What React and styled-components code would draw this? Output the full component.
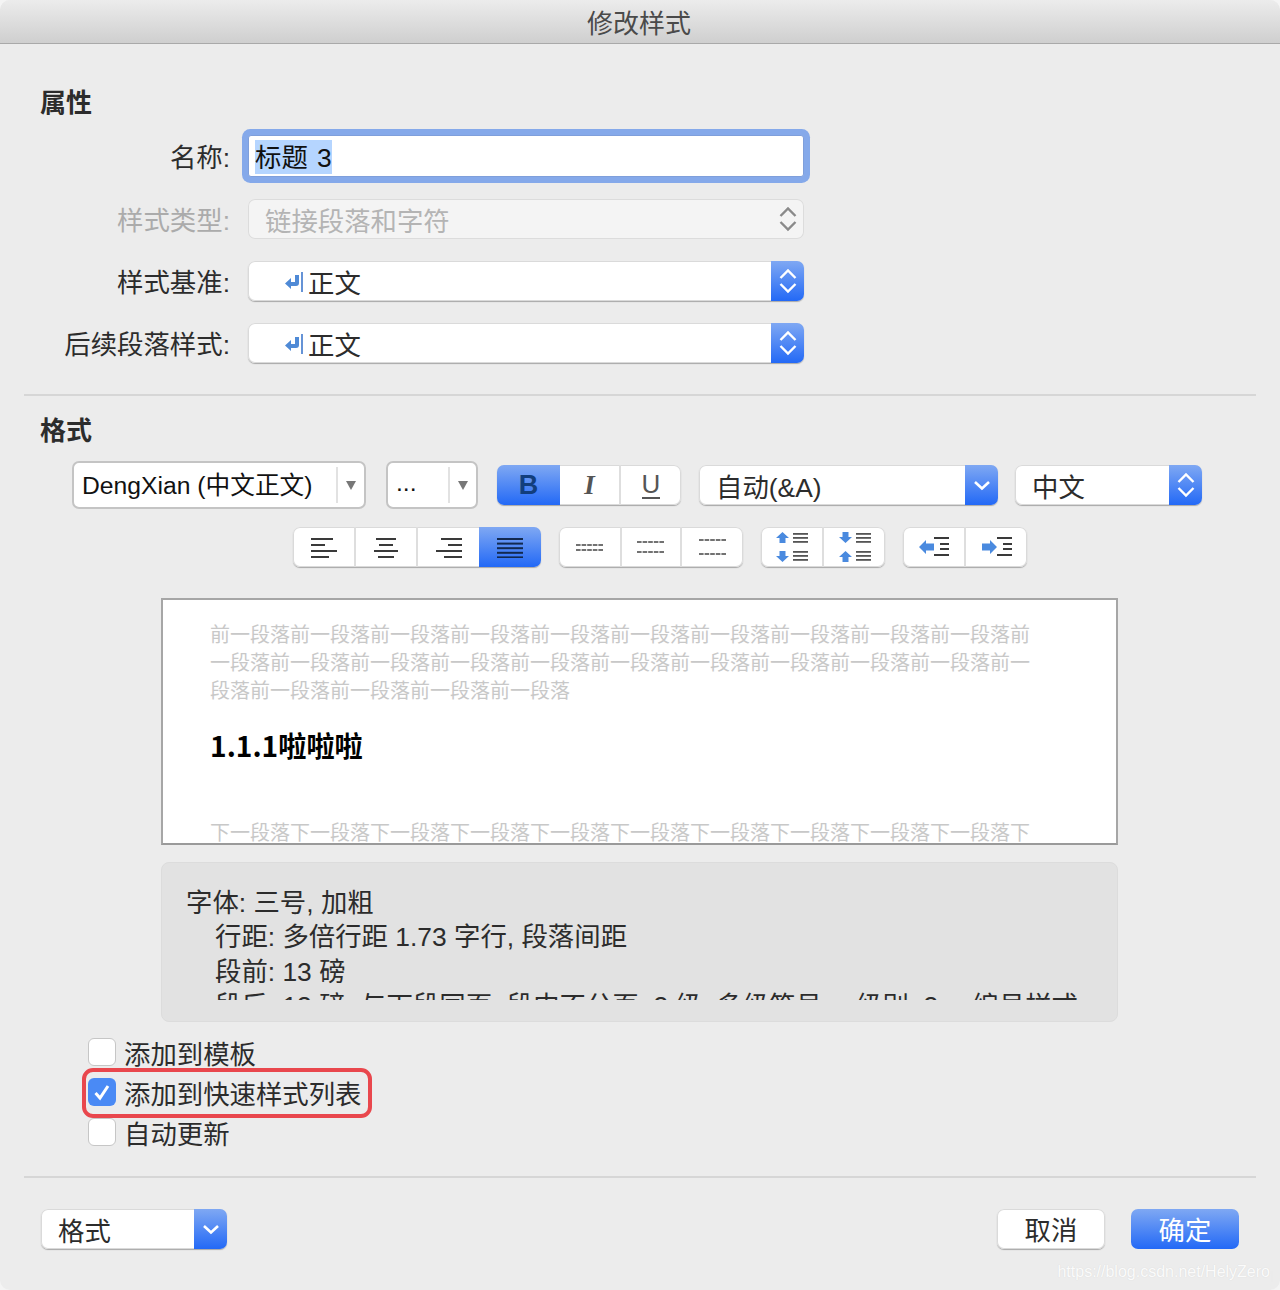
import styled, { createGlobalStyle } from "styled-components";

const GlobalStyle = createGlobalStyle`
  html, body {
    margin: 0;
    padding: 0;
    background: #f4f4f4;
  }
  * {
    box-sizing: border-box;
  }
`;

const BLUE = "linear-gradient(180deg, #7fa8f3 0%, #2369f6 100%)";
const RAISED = "0 1px 1px #a8a8a8, inset 0 0 0 1px #dadada";

const Dialog = styled.div`
  width: 1280px;
  height: 1290px;
  position: relative;
  overflow: hidden;
  background: #ececec;
  border-radius: 10px;
  color: #2c2c2c;
  font-family: "Liberation Sans", "Noto Sans CJK SC", sans-serif;
  font-size: 26.4px;
`;

const TitleBar = styled.div`
  height: 44px;
  display: flex;
  align-items: center;
  justify-content: center;
  padding-right: 2px;
  background: linear-gradient(180deg, #ececec 0%, #cfcfcf 100%);
  border-bottom: 1px solid #a9a9a9;
  color: #4a4a4a;
  font-size: 26px;
`;

const Heading = styled.div`
  height: 30px;
  line-height: 30px;
  margin-left: 40px;
  font-weight: 700;
  font-size: 26px;
`;

const Form = styled.div`
  padding-top: 44px;
`;

const Row = styled.div`
  display: flex;
  align-items: center;
  height: 40px;
  margin-top: ${(p) => p.$top}px;
`;

const Label = styled.div`
  width: 230px;
  margin: -2px 18px 0 0;
  text-align: right;
  color: ${(p) => (p.$disabled ? "#ababab" : "#2c2c2c")};
  white-space: nowrap;
`;

const NameField = styled.div`
  width: 556px;
  height: 42px;
  margin: -1px 0;
  background: #fff;
  border: 1px solid #7f9fdb;
  box-shadow: 0 0 0 6px #85a9ea;
  border-radius: 3px;
  padding: 2px 0 0 6px;
  display: flex;
  align-items: center;
  color: #111;
`;

const Selected = styled.span`
  background: #b5d5ff;
  height: 34px;
  line-height: 37px;
  word-spacing: 2px;
  white-space: pre;
`;

const PopUp = styled.div`
  width: ${(p) => p.$w}px;
  height: 40px;
  margin-left: ${(p) => p.$left || 0}px;
  display: flex;
  align-items: stretch;
  flex: none;
  background: ${(p) => (p.$disabled ? "#f4f4f4" : "#fff")};
  border-radius: 7px;
  overflow: hidden;
  box-shadow: ${(p) => (p.$disabled ? "inset 0 0 0 1px #dcdcdc" : RAISED)};
`;

const PopUpText = styled.div`
  flex: 1;
  display: flex;
  align-items: center;
  padding-left: ${(p) => p.$pad}px;
  color: ${(p) => (p.$disabled ? "#b4b4b4" : "#2c2c2c")};
  white-space: nowrap;
`;

const PopUpArrow = styled.div`
  width: 33px;
  flex: none;
  display: flex;
  align-items: center;
  justify-content: center;
  background: ${(p) => (p.$disabled ? "transparent" : BLUE)};
`;

const Divider = styled.div`
  height: 2px;
  margin: ${(p) => p.$top}px 24px 0;
  background: #d6d6d6;
`;

const FormatHeading = styled(Heading)`
  margin-top: 20px;
`;

const Toolbar = styled.div`
  display: flex;
  align-items: center;
  margin-top: ${(p) => p.$top}px;
  padding-left: ${(p) => p.$left}px;
`;

const Combo = styled.div`
  width: ${(p) => p.$w}px;
  height: 48px;
  margin-left: ${(p) => p.$left || 0}px;
  flex: none;
  display: flex;
  align-items: center;
  background: #fff;
  border: 2px solid #c4c4c4;
  border-radius: 7px;
  color: #111;
  font-size: 24.7px;
`;

const ComboText = styled.div`
  flex: 1;
  margin-top: -4px;
  padding-left: 8px;
  white-space: nowrap;
`;

const ComboCaret = styled.div`
  width: 28px;
  height: 36px;
  flex: none;
  display: flex;
  align-items: center;
  justify-content: center;
  border-left: 2px solid #e2e2e2;
  &::after {
    content: "";
    border-left: 5px solid transparent;
    border-right: 5px solid transparent;
    border-top: 9px solid #777;
  }
`;

const Segments = styled.div`
  display: flex;
  height: 40px;
  flex: none;
  margin-left: ${(p) => p.$left || 0}px;
  background: #fff;
  border-radius: 7px;
  overflow: hidden;
  box-shadow: ${RAISED};
`;

const Segment = styled.div`
  width: ${(p) => p.$w}px;
  flex: none;
  display: flex;
  align-items: center;
  justify-content: center;
  background: ${(p) => (p.$on ? BLUE : "transparent")};
  border-left: ${(p) => (p.$first || p.$on ? "none" : "2px solid #dedede")};
`;

const BoldLetter = styled.span`
  font: 700 27px "Liberation Sans", sans-serif;
  color: #123e7c;
`;

const ItalicLetter = styled.span`
  font: italic 700 27px "Liberation Serif", serif;
  color: #555;
`;

const UnderLetter = styled.span`
  font: 400 26px "Liberation Sans", sans-serif;
  color: #555;
  border-bottom: 2px solid #555;
  line-height: 24px;
  height: 27px;
`;

const Preview = styled.div`
  width: 957px;
  height: 247px;
  margin: 31px 0 0 161px;
  background: #fff;
  border: 2px solid #a6a6a6;
  border-bottom-color: #9a9a9a;
  overflow: hidden;
  padding: 20px 0 0 47px;
  font-family: "Noto Sans CJK SC", sans-serif;
`;

const GhostText = styled.div`
  width: 822px;
  font-size: 20px;
  font-weight: 400;
  line-height: 28px;
  color: #c8c8c8;
  height: ${(p) => p.$h}px;
`;

const PreviewTitle = styled.div`
  height: 40px;
  margin: 21px 0 53px;
  line-height: 40px;
  font-size: 28.2px;
  font-weight: 700;
  color: #000;
`;

const Summary = styled.div`
  width: 957px;
  height: 160px;
  margin: 17px 0 0 161px;
  padding: 23px 0 0 24px;
  background: #e2e2e2;
  border: 1px solid #dcdcdc;
  border-radius: 8px;
`;

const SummaryClip = styled.div`
  height: 114px;
  overflow: hidden;
`;

const SummaryLine = styled.div`
  height: 34.3px;
  line-height: 34.3px;
  padding-left: ${(p) => (p.$indent ? 29 : 0)}px;
  white-space: nowrap;
`;

const Plus = styled.span`
  margin: 0 2px;
`;

const Checks = styled.div`
  position: relative;
  margin: 16px 0 0 88px;
  display: flex;
  flex-direction: column;
  gap: 12px;
`;

const CheckRow = styled.div`
  display: flex;
  align-items: center;
  height: 28px;
  gap: 8px;
  white-space: nowrap;
`;

const CheckBox = styled.div`
  width: 28px;
  height: 28px;
  flex: none;
  display: flex;
  align-items: center;
  justify-content: center;
  border-radius: 6px;
  background: ${(p) => (p.$on ? "#4a8af5" : "#fff")};
  border: ${(p) => (p.$on ? "none" : "1px solid #c6c6c6")};
`;

const Highlight = styled.div`
  position: absolute;
  left: -6px;
  top: 30px;
  width: 290px;
  height: 50px;
  border: 4px solid #e9474d;
  border-radius: 11px;
  pointer-events: none;
`;

const Footer = styled.div`
  display: flex;
  align-items: center;
  margin-top: 31px;
  padding: 0 41px;
`;

const Button = styled.div`
  width: 108px;
  height: 40px;
  margin-left: ${(p) => p.$left}px;
  padding-bottom: 2px;
  flex: none;
  display: flex;
  align-items: center;
  justify-content: center;
  border-radius: 7px;
  background: ${(p) => (p.$primary ? BLUE : "#fff")};
  color: ${(p) => (p.$primary ? "#fff" : "#2c2c2c")};
  box-shadow: ${(p) => (p.$primary ? "none" : RAISED)};
`;

const Spacer = styled.div`
  flex: 1;
`;

const Watermark = styled.div`
  position: absolute;
  right: 10px;
  bottom: 9px;
  font-size: 16px;
  color: #fff;
  opacity: 0.8;
  text-shadow: 0 0 1px #cfcfcf;
`;

const ReturnIcon = styled.svg`
  margin: 2px 5px 0 -1px;
`;

const Updown = ({ color = "#fff" }) => (
  <svg width="18" height="28" viewBox="0 0 18 28" fill="none">
    <path d="M1.5 11L9 3.5l7.5 7.5M1.5 17L9 24.5 16.5 17" stroke={color} strokeWidth="2.4" />
  </svg>
);

const Down = () => (
  <svg width="18" height="12" viewBox="0 0 18 12" fill="none">
    <path d="M2 3l7 6.5L16 3" stroke="#fff" strokeWidth="2.6" />
  </svg>
);

const ReturnMark = () => (
  <ReturnIcon width="19" height="22" viewBox="0 0 19 22">
    <path d="M18 1v20" stroke="#3f78cc" strokeWidth="1.6" />
    <path d="M15 4h-4v7H7V7l-6 5.5L7 18v-3h5c2 0 3-1 3-3z" fill="#4f8ad6" />
  </ReturnIcon>
);

const ALIGN_ROWS = {
  left: [[0, 22], [0, 14], [0, 26], [0, 18]],
  center: [[3, 20], [6, 14], [1, 24], [5, 16]],
  right: [[5, 21], [12, 14], [0, 26], [8, 18]],
  justify: [[0, 26], [0, 26], [0, 26], [0, 26], [0, 26]],
};

const Align = ({ kind, color = "#3a3a3a" }) => {
  const step = kind === "justify" ? 4.6 : 6;
  return (
    <svg width="26" height="21" viewBox="0 0 26 21">
      {ALIGN_ROWS[kind].map(([x, w], i) => (
        <rect key={i} x={x} y={i * step + 1} width={w} height="2" fill={color} />
      ))}
    </svg>
  );
};

const Spacing = ({ rows }) => (
  <svg width="28" height="20" viewBox="0 0 28 20">
    {rows.map((y) => (
      <line key={y} x1="0" x2="28" y1={y} y2={y} stroke="#444" strokeWidth="1.5" strokeDasharray="4.6 1" />
    ))}
  </svg>
);

const ParaSpace = ({ flip }) => (
  <svg width="32" height="30" viewBox="0 0 32 30">
    <path
      d={
        flip
          ? "M3.5 0h6v5H13l-6.5 6L0 5h3.5z M6.5 19L13 25H9.5v5h-6v-5H0z"
          : "M6.5 0L13 6H9.5v5h-6V6H0z M3.5 19h6v5H13l-6.5 6L0 24h3.5z"
      }
      fill="#4a8adf"
    />
    {[2, 6, 10, 20, 24, 28].map((y) => (
      <rect key={y} x="17" y={y - 1} width="15" height="1.8" fill="#555" />
    ))}
  </svg>
);

const Indent = ({ right }) => (
  <svg width="30" height="20" viewBox="0 0 30 20">
    <path
      d={right ? "M0 6.5h8V3l7 7-7 7v-3.5H0z" : "M0 10l7-7v3.5h8v7H7V17z"}
      fill="#4a8adf"
    />
    {[
      [15, 1, 15],
      [21, 7, 9],
      [21, 12, 9],
      [15, 18, 15],
    ].map(([x, y, w]) => (
      <rect key={y} x={x} y={y - 1} width={w} height="2" fill="#3a3a3a" />
    ))}
  </svg>
);

const Check = () => (
  <svg width="20" height="20" viewBox="0 0 20 20" fill="none">
    <path d="M3.5 11l4.5 5L16 4" stroke="#fff" strokeWidth="3" />
  </svg>
);

const App = () => (
  <Dialog>
    <GlobalStyle />
    <TitleBar>修改样式</TitleBar>

    <Form>
      <Heading>属性</Heading>
      <Row $top={18}>
        <Label>名称:</Label>
        <NameField>
          <Selected>标题 3</Selected>
        </NameField>
      </Row>
      <Row $top={23}>
        <Label $disabled>样式类型:</Label>
        <PopUp $w={556} $disabled>
          <PopUpText $pad={17} $disabled>链接段落和字符</PopUpText>
          <PopUpArrow $disabled>
            <Updown color="#8a8a8a" />
          </PopUpArrow>
        </PopUp>
      </Row>
      <Row $top={22}>
        <Label>样式基准:</Label>
        <PopUp $w={556}>
          <PopUpText $pad={37}>
            <ReturnMark />
            正文
          </PopUpText>
          <PopUpArrow>
            <Updown />
          </PopUpArrow>
        </PopUp>
      </Row>
      <Row $top={22}>
        <Label>后续段落样式:</Label>
        <PopUp $w={556}>
          <PopUpText $pad={37}>
            <ReturnMark />
            正文
          </PopUpText>
          <PopUpArrow>
            <Updown />
          </PopUpArrow>
        </PopUp>
      </Row>
    </Form>

    <Divider $top={31} />

    <FormatHeading>格式</FormatHeading>

    <Toolbar $top={15} $left={72}>
      <Combo $w={294}>
        <ComboText>DengXian (中文正文)</ComboText>
        <ComboCaret />
      </Combo>
      <Combo $w={92} $left={20}>
        <ComboText>...</ComboText>
        <ComboCaret />
      </Combo>
      <Segments $left={19}>
        <Segment $w={63} $first $on>
          <BoldLetter>B</BoldLetter>
        </Segment>
        <Segment $w={59} $first>
          <ItalicLetter>I</ItalicLetter>
        </Segment>
        <Segment $w={62}>
          <UnderLetter>U</UnderLetter>
        </Segment>
      </Segments>
      <PopUp $w={299} $left={18}>
        <PopUpText $pad={17}>自动(&amp;A)</PopUpText>
        <PopUpArrow>
          <Down />
        </PopUpArrow>
      </PopUp>
      <PopUp $w={187} $left={17}>
        <PopUpText $pad={17}>中文</PopUpText>
        <PopUpArrow>
          <Updown />
        </PopUpArrow>
      </PopUp>
    </Toolbar>

    <Toolbar $top={18} $left={293}>
      <Segments>
        <Segment $w={61} $first><Align kind="left" /></Segment>
        <Segment $w={62}><Align kind="center" /></Segment>
        <Segment $w={63}><Align kind="right" /></Segment>
        <Segment $w={62} $on><Align kind="justify" color="#12294f" /></Segment>
      </Segments>
      <Segments $left={18}>
        <Segment $w={61} $first><Spacing rows={[8, 13]} /></Segment>
        <Segment $w={60}><Spacing rows={[5, 15]} /></Segment>
        <Segment $w={63}><Spacing rows={[3, 17]} /></Segment>
      </Segments>
      <Segments $left={18}>
        <Segment $w={61} $first><ParaSpace /></Segment>
        <Segment $w={63}><ParaSpace flip /></Segment>
      </Segments>
      <Segments $left={18}>
        <Segment $w={61} $first><Indent /></Segment>
        <Segment $w={63}><Indent right /></Segment>
      </Segments>
    </Toolbar>

    <Preview>
      <GhostText $h={84}>{"前一段落".repeat(25)}</GhostText>
      <PreviewTitle>1.1.1啦啦啦</PreviewTitle>
      <GhostText $h={28}>{"下一段落".repeat(10)}下</GhostText>
    </Preview>

    <Summary>
      <SummaryClip>
        <SummaryLine>字体: 三号, 加粗</SummaryLine>
        <SummaryLine $indent>行距: 多倍行距 1.73 字行, 段落间距</SummaryLine>
        <SummaryLine $indent>段前: 13 磅</SummaryLine>
        <SummaryLine $indent>
          段后: 13 磅, 与下段同页, 段中不分页, 3 级, 多级符号 <Plus>+</Plus> 级别: 3 <Plus>+</Plus> 编号样式
        </SummaryLine>
      </SummaryClip>
    </Summary>

    <Checks>
      <CheckRow>
        <CheckBox />
        添加到模板
      </CheckRow>
      <CheckRow>
        <CheckBox $on>
          <Check />
        </CheckBox>
        添加到快速样式列表
      </CheckRow>
      <CheckRow>
        <CheckBox />
        自动更新
      </CheckRow>
      <Highlight />
    </Checks>

    <Divider $top={30} />

    <Footer>
      <PopUp $w={186}>
        <PopUpText $pad={17}>格式</PopUpText>
        <PopUpArrow>
          <Down />
        </PopUpArrow>
      </PopUp>
      <Spacer />
      <Button $left={0}>取消</Button>
      <Button $left={26} $primary>确定</Button>
    </Footer>

    <Watermark>https://blog.csdn.net/HelyZero</Watermark>
  </Dialog>
);

export default App;
